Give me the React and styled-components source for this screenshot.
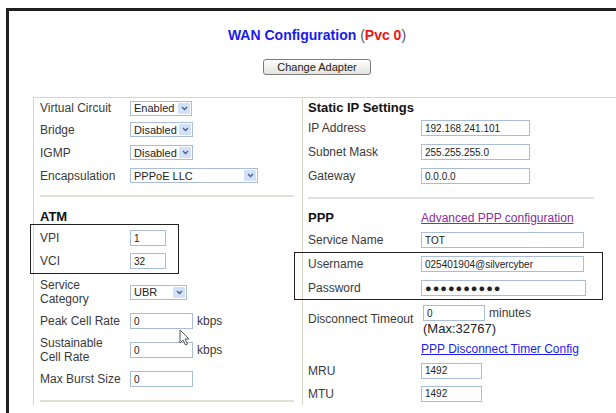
import React from 'react'
import styled, { createGlobalStyle } from 'styled-components'

const Global = createGlobalStyle`
  body {
    margin: 0;
    background: #fff;
    overflow: hidden;
    font-family: "Liberation Sans", Arial, sans-serif;
  }
`

const Frame = styled.div`
  margin: 8px 0 0 6px;
  width: 616px;
  height: 420px;
  border-top: 3px solid #1f1f1f;
  border-left: 3px solid #1f1f1f;
`

const Title = styled.h1`
  margin: 15px 0 0;
  height: 18px;
  line-height: 18px;
  text-align: center;
  font-size: 14px;
  font-weight: bold;
  color: #1a1aee;
`

const Paren = styled.span`
  font-weight: normal;
  color: #555;
`

const Red = styled.span`
  color: #f01414;
`

const ButtonRow = styled.div`
  display: flex;
  justify-content: center;
  margin-top: 15px;
`

const Button = styled.button`
  width: 108px;
  height: 16px;
  padding: 0;
  border: 1px solid #7d7d7d;
  border-radius: 3px;
  background: linear-gradient(#ffffff, #e4e3dc);
  font-family: "Liberation Sans", Arial, sans-serif;
  font-size: 11px;
  color: #222;
`

const Table = styled.div`
  position: relative;
  margin: 22px 0 0 24px;
  display: grid;
  grid-template-columns: 268px 296px;
  border-top: 1px solid #d8d5c8;
  border-left: 1px solid #d8d5c8;
  border-right: 1px solid #d8d5c8;
`

const Cell = styled.div`
  padding: 0 ${p => p.$right}px 0 ${p => p.$left}px;
  border-left: ${p => (p.$divided ? '1px solid #d8d5c8' : 'none')};
`

const Row = styled.div`
  display: grid;
  grid-template-columns: ${p => p.$label}px 1fr;
  align-items: center;
  height: ${p => p.$h}px;
`

const Label = styled.div`
  font-size: 12px;
  line-height: 14px;
  color: #3a3a3a;
`

const Heading = styled.div`
  display: flex;
  align-items: center;
  height: ${p => p.$h}px;
  font-size: 13px;
  font-weight: bold;
  color: #111;
`

const Rule = styled.div`
  height: 2px;
  margin: ${p => p.$top}px 0 ${p => p.$bottom}px;
  background: #e2e0d4;
`

const Field = styled.div`
  display: flex;
  align-items: center;
  gap: 4px;
  font-size: 12px;
  color: #3a3a3a;
`

const Input = styled.input`
  box-sizing: border-box;
  width: ${p => p.$w}px;
  height: 16px;
  padding: 0 3px;
  border: 1px solid #a9bcd8;
  font-family: "Liberation Sans", Arial, sans-serif;
  font-size: ${p => (p.$dots ? 11 : 10)}px;
  font-weight: ${p => (p.$dots ? 'bold' : 'normal')};
  letter-spacing: ${p => (p.$dots ? '1px' : '0')};
  color: #222;
  outline: none;
`

const SelectBox = styled.div`
  box-sizing: border-box;
  display: flex;
  align-items: center;
  justify-content: space-between;
  width: ${p => p.$w}px;
  height: 15px;
  padding-left: 3px;
  border: 1px solid #a9bcd8;
  font-size: 11px;
  color: #222;
`

const Arrow = styled.span`
  display: flex;
  align-items: center;
  justify-content: center;
  width: 12px;
  height: 11px;
  margin-right: 1px;
  background: #d3e0fa;
  border-radius: 1px;
`

const Link = styled.a`
  font-size: 12px;
  color: ${p => (p.$visited ? '#8a2c9c' : '#1c1cf2')};
  text-decoration: underline;
`

const Stack = styled.div`
  align-self: start;
  padding-top: 5px;
`

const Max = styled.div`
  margin-top: 1px;
  font-size: 13px;
  line-height: 14px;
  color: #222;
`

const Marker = styled.div`
  position: absolute;
  left: ${p => p.$x}px;
  top: ${p => p.$y}px;
  width: ${p => p.$w}px;
  height: ${p => p.$h}px;
  border: 1.5px solid #202020;
  box-sizing: border-box;
  pointer-events: none;
`

const Pointer = styled.svg`
  position: absolute;
  left: 145px;
  top: 231px;
`

const Select = ({ w, children }) => (
  <SelectBox $w={w}>
    {children}
    <Arrow>
      <svg width="7" height="5" viewBox="0 0 7 5">
        <path d="M1 1 L3.5 3.5 L6 1" fill="none" stroke="#4a5f8c" strokeWidth="1.4" />
      </svg>
    </Arrow>
  </SelectBox>
)

const LeftRow = ({ h = 23, label, children }) => (
  <Row $label={90} $h={h}>
    <Label>{label}</Label>
    <Field>{children}</Field>
  </Row>
)

const RightRow = ({ h = 24, label, children }) => (
  <Row $label={113} $h={h}>
    <Label>{label}</Label>
    <Field>{children}</Field>
  </Row>
)

export default function App() {
  return (
    <>
      <Global />
      <Frame>
        <Title>
          WAN Configuration <Paren>(</Paren><Red>Pvc 0</Red><Paren>)</Paren>
        </Title>
        <ButtonRow>
          <Button>Change Adapter</Button>
        </ButtonRow>

        <Table>
          <Cell $left={6} $right={8}>
            <LeftRow h={20} label="Virtual Circuit"><Select w={62}>Enabled</Select></LeftRow>
            <LeftRow label="Bridge"><Select w={63}>Disabled</Select></LeftRow>
            <LeftRow label="IGMP"><Select w={63}>Disabled</Select></LeftRow>
            <LeftRow label="Encapsulation"><Select w={128}>PPPoE LLC</Select></LeftRow>
            <Rule $top={8} $bottom={9} />

            <Heading $h={20}>ATM</Heading>
            <LeftRow h={24} label="VPI"><Input $w={36} value="1" readOnly /></LeftRow>
            <LeftRow h={22} label="VCI"><Input $w={36} value="32" readOnly /></LeftRow>
            <LeftRow h={40} label={<>Service<br />Category</>}><Select w={57}>UBR</Select></LeftRow>
            <LeftRow h={18} label="Peak Cell Rate"><Input $w={63} value="0" readOnly />kbps</LeftRow>
            <LeftRow h={40} label={<>Sustainable<br />Cell Rate</>}><Input $w={63} value="0" readOnly />kbps</LeftRow>
            <LeftRow h={18} label="Max Burst Size"><Input $w={63} value="0" readOnly /></LeftRow>
            <Rule $top={12} $bottom={0} />
          </Cell>

          <Cell $divided $left={5} $right={4}>
            <Heading $h={18}>Static IP Settings</Heading>
            <RightRow label="IP Address"><Input $w={109} value="192.168.241.101" readOnly /></RightRow>
            <RightRow label="Subnet Mask"><Input $w={109} value="255.255.255.0" readOnly /></RightRow>
            <RightRow label="Gateway"><Input $w={109} value="0.0.0.0" readOnly /></RightRow>
            <Rule $top={9} $bottom={9} />

            <RightRow h={20} label={<Heading $h={20}>PPP</Heading>}>
              <Link $visited>Advanced PPP configuration</Link>
            </RightRow>
            <RightRow label="Service Name"><Input $w={163} value="TOT" readOnly /></RightRow>
            <RightRow label="Username"><Input $w={163} value="025401904@silvercyber" readOnly /></RightRow>
            <RightRow label="Password"><Input $w={165} $dots value="●●●●●●●●●●" readOnly /></RightRow>
            <Row $label={115} $h={38}>
              <Label>Disconnect Timeout</Label>
              <Stack>
                <Field>
                  <Input $w={62} value="0" readOnly />
                  <span>minutes</span>
                </Field>
                <Max>(Max:32767)</Max>
              </Stack>
            </Row>
            <RightRow h={21} label="">
              <Link>PPP Disconnect Timer Config</Link>
            </RightRow>
            <RightRow h={23} label="MRU"><Input $w={61} value="1492" readOnly /></RightRow>
            <RightRow h={23} label="MTU"><Input $w={61} value="1492" readOnly /></RightRow>
          </Cell>

          <Marker $x={-4} $y={126} $w={149} $h={50} />
          <Marker $x={260} $y={154} $w={309} $h={48} />
          <Pointer width="11" height="17" viewBox="0 0 11 17">
            <path d="M1 1 L1 14 L4 11 L6.5 16 L8.5 15 L6 10 L10 10 Z" fill="#fff" stroke="#555" strokeWidth="1" />
          </Pointer>
        </Table>
      </Frame>
    </>
  )
}
